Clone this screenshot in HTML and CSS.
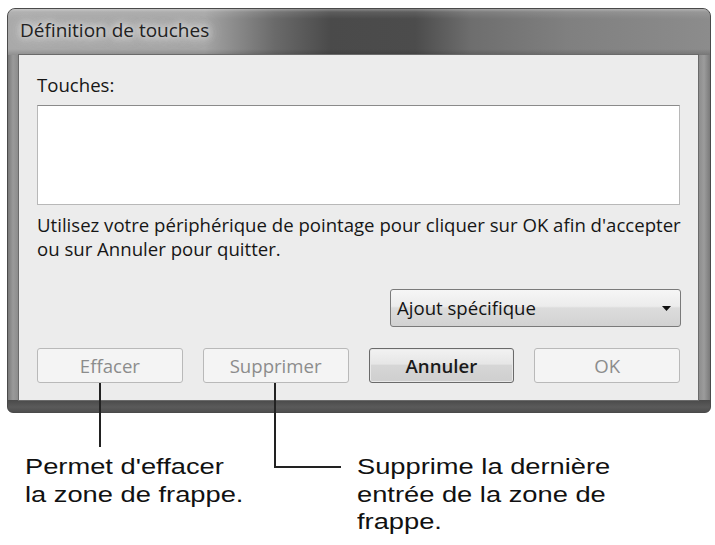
FILE: index.html
```html
<!DOCTYPE html>
<html lang="fr">
<head>
<meta charset="utf-8">
<title>Définition de touches</title>
<link rel="stylesheet" href="styles.css">
</head>
<body>
<div class="page">
  <div class="window">
    <div class="titlebar"><span class="title">Définition de touches</span></div>
    <div class="client">
      <div class="label">Touches:</div>
      <div class="keys"></div>
      <p class="info">Utilisez votre périphérique de pointage pour cliquer sur OK afin d'accepter<br>ou sur Annuler pour quitter.</p>
      <div class="combo-row">
        <div class="combo">
          <span class="combo-text">Ajout spécifique</span>
          <svg class="arrow" width="9" height="5" viewBox="0 0 9 5"><path d="M0 0H9L4.5 5Z" fill="#111"/></svg>
        </div>
      </div>
      <div class="buttons">
        <div class="btn disabled">Effacer</div>
        <div class="btn disabled">Supprimer</div>
        <div class="btn default">Annuler</div>
        <div class="btn disabled">OK</div>
      </div>
    </div>
  </div>
  <div class="notes">
    <p class="note note-left">Permet d'effacer<br>la zone de frappe.</p>
    <p class="note note-right">Supprime la dernière<br>entrée de la zone de<br>frappe.</p>
  </div>
  <div class="leader leader-left"></div>
  <div class="leader leader-right"></div>
</div>
</body>
</html>
```

FILE: styles.css
```css
html, body {
  margin: 0;
  padding: 0;
  background: #ffffff;
}

.page {
  position: relative;
  width: 715px;
  height: 545px;
  overflow: hidden;
  padding-top: 8px;
  box-sizing: border-box;
}

.window {
  margin-left: 7px;
  width: 704px;
  height: 405px;
  box-sizing: border-box;
  border: 1px solid #4a4a4a;
  border-radius: 8px 8px 6px 6px;
  padding: 0 12px 12px 11px;
  background:
    linear-gradient(to top, #4e4e4e 0, #5a5a5a 5px, #4a4a4a 12px, transparent 12px),
    linear-gradient(to right, #7a7a7a 0, #9a9a9a 5px, #8a8a8a 11px, #8a8a8a calc(100% - 12px), #9c9c9c calc(100% - 6px), #7a7a7a 100%);
  display: flex;
  flex-direction: column;
}

.titlebar {
  margin: 0 -12px 0 -11px;
  height: 46px;
  border-radius: 7px 7px 0 0;
  padding-left: 12px;
  box-sizing: border-box;
  display: flex;
  align-items: center;
  background:
    linear-gradient(to bottom, rgba(255,255,255,0.35) 0, rgba(255,255,255,0.1) 3px, rgba(255,255,255,0) 10px, rgba(0,0,0,0) 40px, rgba(0,0,0,0.15) 46px),
    linear-gradient(to right, #a9a9a9 0, #a4a4a4 28%, #6a6a6a 38%, #4a4a4a 46%, #4c4c4c 58%, #6e6e6e 66%, #808080 80%, #8c8c8c 100%);
}

.title {
  font-family: "Open Sans", "Noto Sans", sans-serif;
  font-size: 19px;
  color: #222;
  line-height: 24px;
  margin-top: -4px;
  text-shadow: 0 0 6px #e8e8e8, 0 0 10px #dcdcdc, 0 0 14px #d0d0d0, 0 0 18px #c8c8c8;
}

.client {
  flex: 1;
  background: #ececec;
  box-shadow: 0 0 0 1px #6a6a6a;
  padding: 18px 18px 0 18px;
  font-family: "Open Sans", "Noto Sans", sans-serif;
  font-size: 18.6px;
  line-height: 24px;
  color: #161616;
  display: flex;
  flex-direction: column;
}

.label {
  height: 24px;
}

.keys {
  margin-top: 8px;
  height: 100px;
  box-sizing: border-box;
  background: #ffffff;
  border: 1px solid #b8b8b8;
  border-top-color: #8a8a8a;
}

.info {
  margin: 8px 0 0 0;
  white-space: nowrap;
}

.combo-row {
  margin-top: 28px;
  display: flex;
  justify-content: flex-end;
}

.combo {
  width: 291px;
  height: 38px;
  box-sizing: border-box;
  border: 1px solid #7a7a7a;
  border-radius: 3px;
  background: linear-gradient(to bottom, #f6f6f6 0, #ececec 45%, #dcdcdc 50%, #d2d2d2 100%);
  display: flex;
  align-items: center;
  justify-content: space-between;
  padding: 0 9px 0 6px;
  margin-right: -1px;
}

.combo-text {
  color: #141414;
}

.arrow {
  display: block;
}

.buttons {
  margin-top: 21px;
  display: grid;
  grid-template-columns: repeat(4, 1fr);
  gap: 20px;
}

.btn {
  height: 35px;
  box-sizing: border-box;
  border-radius: 3px;
  display: flex;
  align-items: center;
  justify-content: center;
}

.btn.disabled {
  border: 1px solid #b9b9b9;
  background: #f4f4f4;
  color: #8c8c8c;
}

.btn.default {
  border: 1px solid #6a6a6a;
  background: linear-gradient(to bottom, #f2f2f2 0, #e6e6e6 45%, #d6d6d6 50%, #cfcfcf 100%);
  color: #1a1a1a;
  font-weight: 600;
  box-shadow: inset 0 0 0 1px #e8e8e8;
}

.notes {
  margin-top: 40px;
  display: flex;
  font-family: "Liberation Sans", Arial, sans-serif;
  font-size: 22px;
  line-height: 27.5px;
  color: #111;
}

.note {
  margin: 0;
  transform: scaleX(1.24);
  transform-origin: left top;
  white-space: nowrap;
}

.note-left {
  margin-left: 25px;
  width: 332px;
}

.leader {
  position: absolute;
  border-color: #222;
  border-style: solid;
  border-width: 0;
}

.leader-left {
  left: 99px;
  top: 383px;
  height: 64px;
  border-left-width: 2px;
}

.leader-right {
  left: 274px;
  top: 383px;
  height: 83px;
  width: 65px;
  border-left-width: 2px;
  border-bottom-width: 2px;
}
```
